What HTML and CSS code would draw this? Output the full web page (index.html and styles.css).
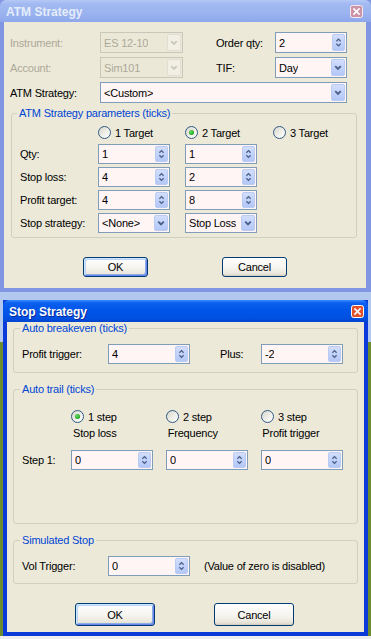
FILE: index.html
```html
<!DOCTYPE html>
<html>
<head>
<meta charset="utf-8">
<title>ATM Strategy</title>
<link rel="stylesheet" href="styles.css">
</head>
<body>
<div class="screen">

  <div class="win inactive win1">
    <div class="titlebar">
      <span class="title">ATM Strategy</span>
      <span class="close"><svg width="13" height="13" viewBox="0 0 13 13"><rect x="0.5" y="0.5" width="12" height="12" rx="2" class="cbg"/><path d="M4 4 L9 9 M9 4 L4 9" stroke="#fff" stroke-width="1.7" stroke-linecap="square"/></svg></span>
    </div>
    <div class="client c1">
      <div class="row">
        <span class="lbl dis lw90">Instrument:</span>
        <div class="combo dis w83"><span class="val">ES 12-10</span><span class="ddbtn"><svg width="13" height="17" viewBox="0 0 13 17"><polyline points="3.5,7 6.5,10 9.5,7" fill="none" stroke-width="2"/></svg></span></div>
        <span class="lbl lw59 ml33">Order qty:</span>
        <div class="spin w72"><span class="val">2</span><span class="spbtn"><svg width="13" height="17" viewBox="0 0 13 17"><polyline points="4,7 6.5,4.5 9,7" fill="none" stroke-width="1.5"/><polyline points="4,10 6.5,12.5 9,10" fill="none" stroke-width="1.5"/></svg></span></div>
      </div>
      <div class="row">
        <span class="lbl dis lw90">Account:</span>
        <div class="combo dis w83"><span class="val">Sim101</span><span class="ddbtn"><svg width="13" height="17" viewBox="0 0 13 17"><polyline points="3.5,7 6.5,10 9.5,7" fill="none" stroke-width="2"/></svg></span></div>
        <span class="lbl lw59 ml33">TIF:</span>
        <div class="combo w72"><span class="val">Day</span><span class="ddbtn"><svg width="13" height="17" viewBox="0 0 13 17"><polyline points="3.5,7 6.5,10 9.5,7" fill="none" stroke-width="2"/></svg></span></div>
      </div>
      <div class="row">
        <span class="lbl lw90">ATM Strategy:</span>
        <div class="combo w247"><span class="val">&lt;Custom&gt;</span><span class="ddbtn"><svg width="13" height="17" viewBox="0 0 13 17"><polyline points="3.5,7 6.5,10 9.5,7" fill="none" stroke-width="2"/></svg></span></div>
      </div>

      <fieldset class="group g-atm">
        <legend>ATM Strategy parameters (ticks)</legend>
        <div class="gbody gb-atm">
          <div class="radiorow rr-atm">
            <label class="ropt ro87"><span class="radio"></span><span class="rtxt">1 Target</span></label>
            <label class="ropt ro88"><span class="radio on"></span><span class="rtxt">2 Target</span></label>
            <label class="ropt"><span class="radio"></span><span class="rtxt">3 Target</span></label>
          </div>
          <div class="frow">
            <span class="lbl lw78">Qty:</span>
            <div class="spin w72"><span class="val">1</span><span class="spbtn"><svg width="13" height="16" viewBox="0 0 13 16"><polyline points="4,6.5 6.5,4 9,6.5" fill="none" stroke-width="1.5"/><polyline points="4,9.5 6.5,12 9,9.5" fill="none" stroke-width="1.5"/></svg></span></div>
            <div class="spin w72 ml15"><span class="val">1</span><span class="spbtn"><svg width="13" height="16" viewBox="0 0 13 16"><polyline points="4,6.5 6.5,4 9,6.5" fill="none" stroke-width="1.5"/><polyline points="4,9.5 6.5,12 9,9.5" fill="none" stroke-width="1.5"/></svg></span></div>
          </div>
          <div class="frow">
            <span class="lbl lw78">Stop loss:</span>
            <div class="spin w72"><span class="val">4</span><span class="spbtn"><svg width="13" height="16" viewBox="0 0 13 16"><polyline points="4,6.5 6.5,4 9,6.5" fill="none" stroke-width="1.5"/><polyline points="4,9.5 6.5,12 9,9.5" fill="none" stroke-width="1.5"/></svg></span></div>
            <div class="spin w72 ml15"><span class="val">2</span><span class="spbtn"><svg width="13" height="16" viewBox="0 0 13 16"><polyline points="4,6.5 6.5,4 9,6.5" fill="none" stroke-width="1.5"/><polyline points="4,9.5 6.5,12 9,9.5" fill="none" stroke-width="1.5"/></svg></span></div>
          </div>
          <div class="frow">
            <span class="lbl lw78">Profit target:</span>
            <div class="spin w72"><span class="val">4</span><span class="spbtn"><svg width="13" height="16" viewBox="0 0 13 16"><polyline points="4,6.5 6.5,4 9,6.5" fill="none" stroke-width="1.5"/><polyline points="4,9.5 6.5,12 9,9.5" fill="none" stroke-width="1.5"/></svg></span></div>
            <div class="spin w72 ml15"><span class="val">8</span><span class="spbtn"><svg width="13" height="16" viewBox="0 0 13 16"><polyline points="4,6.5 6.5,4 9,6.5" fill="none" stroke-width="1.5"/><polyline points="4,9.5 6.5,12 9,9.5" fill="none" stroke-width="1.5"/></svg></span></div>
          </div>
          <div class="frow">
            <span class="lbl lw78">Stop strategy:</span>
            <div class="combo w72"><span class="val">&lt;None&gt;</span><span class="ddbtn"><svg width="13" height="16" viewBox="0 0 13 16"><polyline points="3.5,6.5 6.5,9.5 9.5,6.5" fill="none" stroke-width="2"/></svg></span></div>
            <div class="combo w72 ml15"><span class="val">Stop Loss</span><span class="ddbtn"><svg width="13" height="16" viewBox="0 0 13 16"><polyline points="3.5,6.5 6.5,9.5 9.5,6.5" fill="none" stroke-width="2"/></svg></span></div>
          </div>
        </div>
      </fieldset>

      <div class="buttons b1">
        <div class="btn default">OK</div>
        <div class="btn">Cancel</div>
      </div>
    </div>
  </div>

  <div class="win active win2">
    <div class="titlebar">
      <span class="title">Stop Strategy</span>
      <span class="close"><svg width="13" height="13" viewBox="0 0 13 13"><rect x="0.5" y="0.5" width="12" height="12" rx="2" class="cbg"/><path d="M4 4 L9 9 M9 4 L4 9" stroke="#fff" stroke-width="1.7" stroke-linecap="square"/></svg></span>
    </div>
    <div class="client c2">
      <fieldset class="group g2 g-be">
        <legend>Auto breakeven (ticks)</legend>
        <div class="gbody gb-be">
          <div class="frow">
            <span class="lbl lw86">Profit trigger:</span>
            <div class="spin w82"><span class="val">4</span><span class="spbtn"><svg width="13" height="16" viewBox="0 0 13 16"><polyline points="4,6.5 6.5,4 9,6.5" fill="none" stroke-width="1.5"/><polyline points="4,9.5 6.5,12 9,9.5" fill="none" stroke-width="1.5"/></svg></span></div>
            <span class="lbl lw41 ml30">Plus:</span>
            <div class="spin w82"><span class="val">-2</span><span class="spbtn"><svg width="13" height="16" viewBox="0 0 13 16"><polyline points="4,6.5 6.5,4 9,6.5" fill="none" stroke-width="1.5"/><polyline points="4,9.5 6.5,12 9,9.5" fill="none" stroke-width="1.5"/></svg></span></div>
          </div>
        </div>
      </fieldset>

      <fieldset class="group g2 g-trail">
        <legend>Auto trail (ticks)</legend>
        <div class="gbody gb-trail">
          <div class="radiorow rr-trail">
            <label class="ropt ro95"><span class="radio on"></span><span class="rtxt">1 step</span></label>
            <label class="ropt ro95"><span class="radio"></span><span class="rtxt">2 step</span></label>
            <label class="ropt"><span class="radio"></span><span class="rtxt">3 step</span></label>
          </div>
          <div class="subrow">
            <span class="sub">Stop loss</span>
            <span class="sub">Frequency</span>
            <span class="sub">Profit trigger</span>
          </div>
          <div class="frow steprow">
            <span class="lbl lw49">Step 1:</span>
            <div class="spin w82"><span class="val">0</span><span class="spbtn"><svg width="13" height="16" viewBox="0 0 13 16"><polyline points="4,6.5 6.5,4 9,6.5" fill="none" stroke-width="1.5"/><polyline points="4,9.5 6.5,12 9,9.5" fill="none" stroke-width="1.5"/></svg></span></div>
            <div class="spin w82 ml13"><span class="val">0</span><span class="spbtn"><svg width="13" height="16" viewBox="0 0 13 16"><polyline points="4,6.5 6.5,4 9,6.5" fill="none" stroke-width="1.5"/><polyline points="4,9.5 6.5,12 9,9.5" fill="none" stroke-width="1.5"/></svg></span></div>
            <div class="spin w82 ml13"><span class="val">0</span><span class="spbtn"><svg width="13" height="16" viewBox="0 0 13 16"><polyline points="4,6.5 6.5,4 9,6.5" fill="none" stroke-width="1.5"/><polyline points="4,9.5 6.5,12 9,9.5" fill="none" stroke-width="1.5"/></svg></span></div>
          </div>
        </div>
      </fieldset>

      <fieldset class="group g2 g-sim">
        <legend>Simulated Stop</legend>
        <div class="gbody gb-sim">
          <div class="frow">
            <span class="lbl lw86">Vol Trigger:</span>
            <div class="spin w82"><span class="val">0</span><span class="spbtn"><svg width="13" height="16" viewBox="0 0 13 16"><polyline points="4,6.5 6.5,4 9,6.5" fill="none" stroke-width="1.5"/><polyline points="4,9.5 6.5,12 9,9.5" fill="none" stroke-width="1.5"/></svg></span></div>
            <span class="note">(Value of zero is disabled)</span>
          </div>
        </div>
      </fieldset>

      <div class="buttons b2">
        <div class="btn default">OK</div>
        <div class="btn">Cancel</div>
      </div>
    </div>
  </div>

</div>
</body>
</html>
```

FILE: styles.css
```css
* { box-sizing: border-box; }

html, body {
  margin: 0;
  padding: 0;
}

body {
  width: 371px;
  height: 639px;
  overflow: hidden;
  font-family: "Liberation Sans", Arial, sans-serif;
  font-size: 11px;
  letter-spacing: -0.2px;
  color: #000;
  background: linear-gradient(to bottom, #b3c8ef 0, #b3c8ef 342px, #6d8b2f 342px, #6d8b2f 636px, #eeeeee 636px);
}

.screen {
  display: flex;
  flex-direction: column;
  gap: 8px;
}

/* ---------- windows ---------- */
.win {
  display: flex;
  flex-direction: column;
  padding-bottom: 4px;
}

.win1 {
  width: 371px;
  height: 292px;
  background: #8196e2;
}

.win2 {
  width: 365px;
  height: 336px;
  margin-left: 3px;
  background: #0a3ad9;
}

.titlebar {
  height: 22px;
  flex: none;
  display: flex;
  align-items: center;
  justify-content: space-between;
  padding: 0 8px 0 6px;
  border-radius: 6px 6px 0 0;
}

.win2 .titlebar { padding-right: 4px; }

.inactive .titlebar {
  background: linear-gradient(to bottom, #b5c8f5 0, #a2b9f1 4px, #9bb3ef 60%, #8ea8ec 100%);
}

.active .titlebar {
  background: linear-gradient(to bottom, #3a8cff 0, #0c5fee 3px, #0055e8 50%, #004fe0 85%, #0043cc 100%);
}

.title {
  font-family: "Liberation Sans", Arial, sans-serif;
  font-weight: bold;
  font-size: 12px;
  letter-spacing: 0;
  padding-top: 1px;
}

.inactive .title { color: #e4ecfb; }
.active .title { color: #fff; text-shadow: 1px 1px 0 #0a2a9a; }

.close { display: flex; margin-top: 1px; }
.close .cbg { stroke: #fff; stroke-width: 1; }
.inactive .close .cbg { fill: #cd93a6; stroke: #f4eaf0; }
.active .close .cbg { fill: #e3532b; }

.client {
  background: #ece9d8;
  flex: 1;
}

.c1 {
  margin: 0 5px 0 4px;
  padding-top: 10px;
}

.c2 {
  margin: 0 4px;
  padding-top: 0;
}

/* ---------- rows ---------- */
.row {
  display: flex;
  align-items: center;
  height: 21px;
  margin-left: 6px;
  margin-bottom: 4px;
}

.frow {
  display: flex;
  align-items: center;
  height: 20px;
  margin-bottom: 3px;
}

.frow:last-child { margin-bottom: 0; }

.lbl { flex: none; white-space: nowrap; }
.lbl.dis { color: #aca899; }

.lw90 { width: 90px; }
.lw59 { width: 59px; }
.lw78 { width: 78px; }
.lw86 { width: 86px; }
.lw41 { width: 41px; }
.lw49 { width: 49px; }
.ml33 { margin-left: 33px; }
.ml30 { margin-left: 30px; }
.ml15 { margin-left: 15px; }
.ml13 { margin-left: 13px; }

.w83 { width: 83px; }
.w72 { width: 72px; }
.w82 { width: 82px; }
.w247 { width: 247px; }

/* ---------- inputs ---------- */
.spin, .combo {
  flex: none;
  height: 100%;
  display: flex;
  align-items: center;
  justify-content: space-between;
  border: 1px solid #7f9db9;
  background: #fff5f5;
  padding: 1px 1px 1px 3px;
}

.val { white-space: nowrap; overflow: hidden; }

.spbtn, .ddbtn {
  flex: none;
  width: 13px;
  height: 100%;
  display: flex;
  align-items: center;
  justify-content: center;
  border-radius: 2px;
  background: linear-gradient(to bottom, #d3defc 0, #c3d3fb 45%, #b4c8f6 100%);
  border: 1px solid #b9caf3;
}

.ddbtn { width: 14px; }

.spbtn svg polyline, .ddbtn svg polyline { stroke: #4a5f86; }

.combo.dis {
  border-color: #c9c7ba;
  background: #ebe8d8;
  color: #aca899;
}

.combo.dis .ddbtn {
  background: #f2f0e5;
  border-color: #e1dfd3;
}

.combo.dis .ddbtn svg polyline { stroke: #c9c7ba; }

/* ---------- group boxes ---------- */
.group {
  margin: 0;
  padding: 0;
  min-width: 0;
  border: 1px solid #d0d0bf;
  border-radius: 3px;
}

.group legend {
  padding: 0 2px;
  margin-left: 5px;
  line-height: 13px;
  color: #0046d5;
}

.g2 legend { margin-left: 6px; }

.g-atm {
  width: 346px;
  margin: 2px 0 0 7px;
}

.gb-atm { padding: 6px 0 4px 8px; }

.radiorow {
  display: flex;
  align-items: center;
  height: 13px;
}

.rr-atm { margin-left: 78px; margin-bottom: 5px; }

.ropt {
  display: flex;
  align-items: center;
  flex: none;
}

.ro87 { width: 87px; }
.ro88 { width: 88px; }
.ro95 { width: 95px; }

.radio {
  width: 13px;
  height: 13px;
  flex: none;
  border-radius: 50%;
  border: 1px solid #2f5a86;
  background: linear-gradient(135deg, #d8d7cc 0, #eeede6 50%, #ffffff 100%);
  display: flex;
  align-items: center;
  justify-content: center;
}

.radio.on::after {
  content: "";
  width: 5px;
  height: 5px;
  border-radius: 50%;
  background: radial-gradient(circle at 40% 40%, #6fe06f 0, #2bb22b 50%, #18901a 100%);
}

.rtxt { margin-left: 4px; white-space: nowrap; }

.buttons {
  display: flex;
}

.b1 {
  margin-top: 19px;
  padding-left: 79px;
  gap: 74px;
}

.b1 .btn { width: 65px; height: 20px; }

.b2 {
  margin-top: 19px;
  padding-left: 68px;
  gap: 59px;
}

.b2 .btn { width: 80px; height: 23px; }

.btn {
  display: flex;
  align-items: center;
  justify-content: center;
  border: 1px solid #003c74;
  border-radius: 3px;
  background: linear-gradient(to bottom, #ffffff 0, #f5f4ef 55%, #ebe7dc 85%, #d9d4c6 100%);
  box-shadow: inset 0 -1px 0 #d6d0c2;
}

.btn.default {
  box-shadow: inset 1px 1px 0 #cee7ff, inset -1px -1px 0 #6982ee, inset 2px 2px 0 #bcd4f6, inset -2px -2px 0 #89ade4;
}

/* ---------- window 2 groups ---------- */
.g2 {
  width: 345px;
  margin-left: 6px;
}

.gb-be { padding: 9px 0 8px 8px; }

.g-trail { margin-top: 10px; }
.gb-trail { padding: 14px 0 53px 8px; }

.rr-trail { margin-left: 49px; }

.subrow {
  display: flex;
  margin-left: 51px;
  margin-top: 4px;
  line-height: 13px;
}

.sub { width: 95px; white-space: nowrap; }

.steprow { margin-top: 10px; }

.g-sim { margin-top: 10px; }
.gb-sim { padding: 9px 0 7px 8px; }

.note { margin-left: 14px; white-space: nowrap; }
```
